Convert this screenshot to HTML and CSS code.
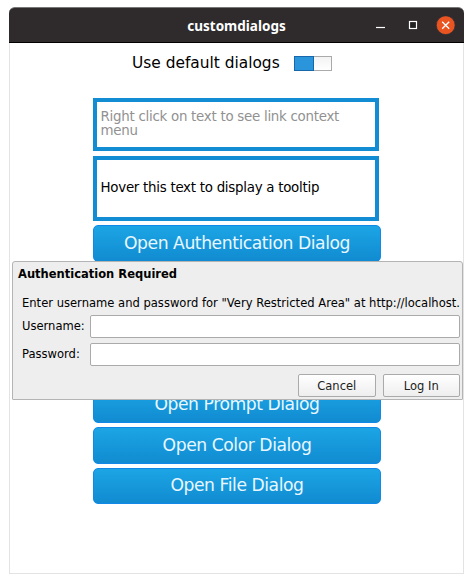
FILE: index.html
```html
<!DOCTYPE html>
<html lang="en">
<head>
<meta charset="utf-8">
<title>customdialogs</title>
<link rel="stylesheet" href="styles.css">
</head>
<body>
<div class="window">
  <header class="titlebar">
    <h1 class="title">customdialogs</h1>
    <div class="controls">
      <svg width="92" height="22" viewBox="0 0 92 22">
        <path d="M9 11.5h9" stroke="#fff" stroke-width="1.2"/>
        <rect x="42.5" y="5.5" width="7" height="7" fill="#222" stroke="#fff" stroke-width="1.2"/>
        <circle cx="78.7" cy="9.2" r="9.4" fill="#e95420" stroke="#242e39" stroke-width=".7"/>
        <path d="M75.2 5.7l7 7m0-7l-7 7" stroke="#fff" stroke-width="1.3"/>
      </svg>
    </div>
  </header>
  <main class="content">
    <div class="setting">
      <span class="setting-label">Use default dialogs</span>
      <span class="switch"><span class="switch-on"></span></span>
    </div>
    <div class="field field-menu">Right click on text to see link context menu</div>
    <div class="field field-tip">Hover this text to display a tooltip</div>
    <button class="action">Open Authentication Dialog</button>
    <div class="lower-actions">
      <button class="action">Open Prompt Dialog</button>
      <button class="action">Open Color Dialog</button>
      <button class="action">Open File Dialog</button>
    </div>
  </main>
  <section class="dialog">
    <h2 class="dialog-title">Authentication Required</h2>
    <p class="message">Enter username and password for "Very Restricted Area" at http://localhost.</p>
    <div class="row"><label for="user">Username:</label><input id="user" type="text"></div>
    <div class="row"><label for="pass">Password:</label><input id="pass" type="password"></div>
    <div class="dialog-buttons">
      <button class="small">Cancel</button>
      <button class="small">Log In</button>
    </div>
  </section>
</div>
</body>
</html>
```
FILE: styles.css
```css
* { box-sizing: border-box; }
body {
  margin: 0;
  padding: 7px 9px 0;
  background: #fff;
  font-family: "DejaVu Sans", sans-serif;
  color: #000;
  overflow: hidden;
}
h1, h2, p { margin: 0; }
.window {
  position: relative;
  width: 455px;
  height: 567px;
  border: 1px solid #e3e3e3;
  border-top: 0;
  border-radius: 6px 6px 0 0;
}
.titlebar {
  display: flex;
  align-items: center;
  justify-content: flex-end;
  height: 36px;
  margin: 0 -1px;
  background: #2f2b2d;
  border-top: 1px solid #777;
  border-bottom: 1px solid #000;
  border-radius: 6px 6px 0 0;
}
.title {
  flex: 1;
  padding-left: 97px;
  padding-top: 1px;
  text-align: center;
  font: bold 13.5px/20px "Noto Sans", "Open Sans", sans-serif;
  color: #fff;
}
.controls { width: 97px; height: 22px; margin-top: 4px; }
.controls svg { display: block; }
.content { display: flex; flex-direction: column; align-items: flex-start; padding-left: 83px; }
.setting { display: flex; align-items: center; height: 40px; margin: 0 0 15px 39px; }
.setting-label { font-size: 15.4px; white-space: nowrap; width: 162px; }
.switch {
  width: 38px;
  height: 15px;
  border: 1px solid #aaa;
  background: linear-gradient(#f3f3f3, #fff);
}
.switch-on {
  display: block;
  width: 20px;
  height: 15px;
  margin: -1px;
  background: #2b95dc;
  border: 1px solid #1767ac;
}
.field {
  width: 286px;
  border: 4px solid #128dd3;
  padding: 0 3.5px;
  font-size: 13.4px;
  letter-spacing: -.27px;
  line-height: 14.3px;
}
.field-menu { height: 53px; padding-top: 8px; color: #919191; }
.field-tip { height: 65px; margin-top: 4.5px; line-height: 56px; }
.action {
  display: block;
  width: 288px;
  height: 36.5px;
  margin: 4px 0 0;
  padding: 0 0 1px;
  border: 1px solid #1288e8;
  border-radius: 5px;
  background: linear-gradient(#1ca5e5, #118bd1);
  color: #e8f7ff;
  font: 17.2px "DejaVu Sans", sans-serif;
  letter-spacing: -.45px;
}
.field-tip + .action { margin-top: 4.5px; }
.lower-actions { margin-top: 121px; }
.dialog {
  position: absolute;
  left: 2px;
  top: 254px;
  width: 451px;
  height: 139px;
  padding: 5px 2px 0 9px;
  background: #eee;
  border: 1px solid #b4b4b4;
  border-radius: 3px 3px 1px 1px;
  font-size: 11.55px;
}
.dialog-title { margin-left: -4px; font-size: 11.5px; line-height: 14px; }
.message { margin-top: 15px; line-height: 14px; white-space: nowrap; }
.row { display: flex; align-items: center; height: 24px; margin-top: 4px; }
.row label { width: 68px; }
.row input {
  flex: 1;
  height: 23px;
  border: 1px solid #aaa;
  border-radius: 2px;
  background: #fff;
}
.dialog-buttons { display: flex; justify-content: flex-end; gap: 7px; margin-top: 8px; }
.small {
  width: 77.5px;
  height: 23px;
  padding: 0;
  border: 1px solid #aaa;
  border-radius: 2px;
  background: linear-gradient(#fff, #eee);
  color: #222;
  font: 11.5px "DejaVu Sans", sans-serif;
}
```
